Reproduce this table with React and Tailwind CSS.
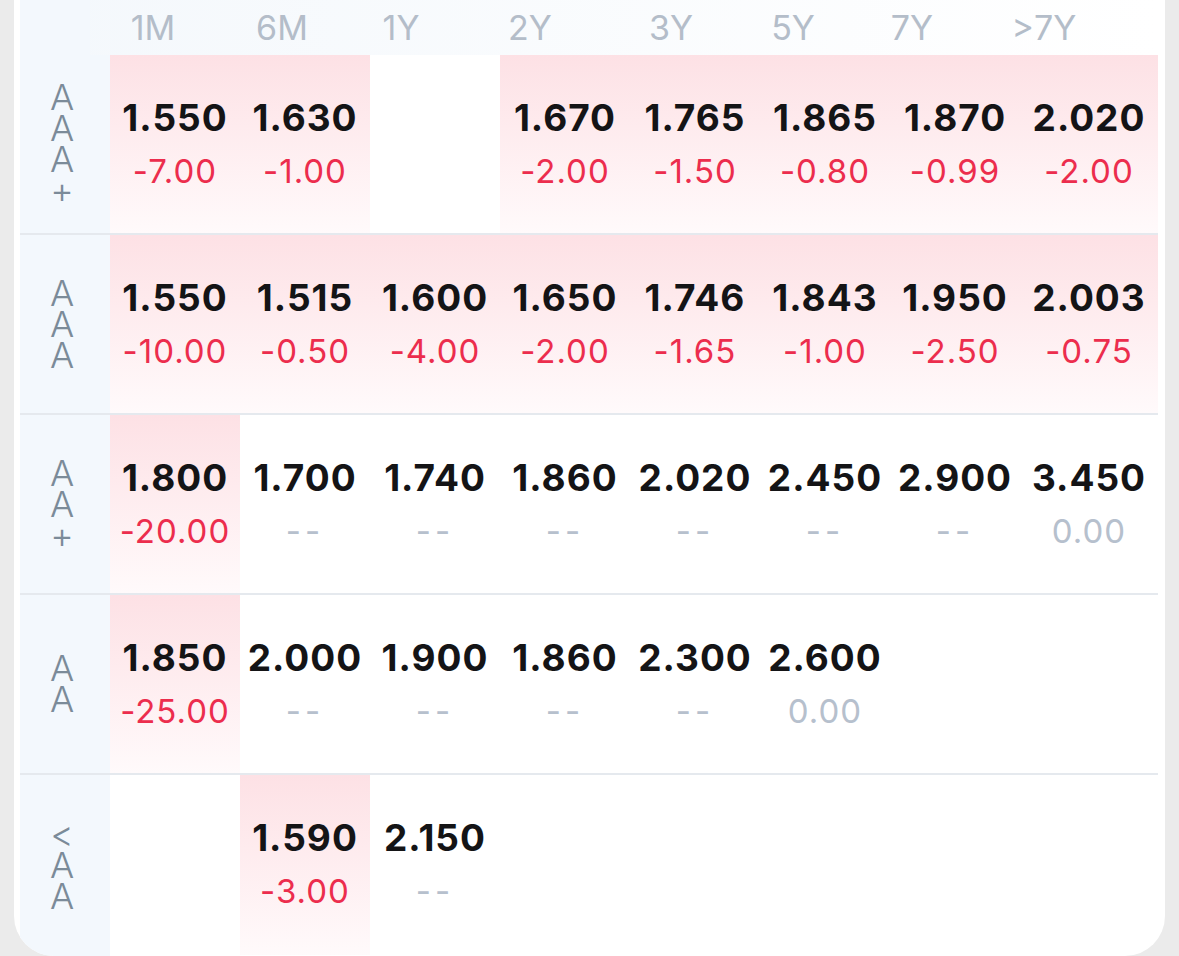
import React from 'react';

const headers = [
  { label: '1M', w: 'w-[126px]' },
  { label: '6M', w: 'w-[132px]' },
  { label: '1Y', w: 'w-[106px]' },
  { label: '2Y', w: 'w-[152px]' },
  { label: '3Y', w: 'w-[130px]' },
  { label: '5Y', w: 'w-[114px]' },
  { label: '7Y', w: 'w-[124px]' },
  { label: '>7Y', w: 'w-[140px]' },
];

// each cell: [rate, change, highlighted]; null = empty
const rows = [
  {
    label: 'AAA+',
    cells: [
      ['1.550', '-7.00', true],
      ['1.630', '-1.00', true],
      null,
      ['1.670', '-2.00', true],
      ['1.765', '-1.50', true],
      ['1.865', '-0.80', true],
      ['1.870', '-0.99', true],
      ['2.020', '-2.00', true],
    ],
  },
  {
    label: 'AAA',
    cells: [
      ['1.550', '-10.00', true],
      ['1.515', '-0.50', true],
      ['1.600', '-4.00', true],
      ['1.650', '-2.00', true],
      ['1.746', '-1.65', true],
      ['1.843', '-1.00', true],
      ['1.950', '-2.50', true],
      ['2.003', '-0.75', true],
    ],
  },
  {
    label: 'AA+',
    cells: [
      ['1.800', '-20.00', true],
      ['1.700', '--', false],
      ['1.740', '--', false],
      ['1.860', '--', false],
      ['2.020', '--', false],
      ['2.450', '--', false],
      ['2.900', '--', false],
      ['3.450', '0.00', false],
    ],
  },
  {
    label: 'AA',
    cells: [
      ['1.850', '-25.00', true],
      ['2.000', '--', false],
      ['1.900', '--', false],
      ['1.860', '--', false],
      ['2.300', '--', false],
      ['2.600', '0.00', false],
      null,
      null,
    ],
  },
  {
    label: '<AA',
    cells: [
      null,
      ['1.590', '-3.00', true],
      ['2.150', '--', false],
      null,
      null,
      null,
      null,
      null,
    ],
  },
];

function Cell({ cell }) {
  if (!cell) return <div />;
  const [rate, change, hot] = cell;
  const down = change.startsWith('-') && change !== '--';
  return (
    <div
      className={
        'flex flex-col items-center pt-[35px] ' +
        (hot ? 'bg-linear-to-b from-[#fde1e5] to-[#fffafb]' : '')
      }
    >
      <span className="text-[37px] leading-[56px] font-bold tracking-[1px] text-[#141416]">{rate}</span>
      <span
        className={
          'text-[33px] leading-[50px] tracking-[1px] ' +
          (down ? 'text-[#ec2d4d]' : change === '--' ? 'text-[#b6c0cd] tracking-[4px]' : 'text-[#b6c0cd]')
        }
      >
        {change}
      </span>
    </div>
  );
}

export default function App() {
  return (
    <div className="min-h-screen bg-[#ebebeb] pl-[14px] pr-[14px] font-['Inter','Noto_Sans',sans-serif]">
      <div className="h-[956px] overflow-hidden rounded-b-[40px] bg-white px-[6px] pr-[7px]">
        <div className="flex h-full flex-col">
          {/* Header */}
          <div className="flex h-[55px] shrink-0 items-center bg-linear-to-r from-[#f4f8fc] to-white">
            <div className="h-full w-[70px] bg-[#f3f8fd]" />
            {headers.map((h) => (
              <div key={h.label} className={h.w + ' text-center text-[34px] leading-[55px] text-[#b4bdc9]'}>
                {h.label}
              </div>
            ))}
          </div>

          {rows.map((r, i) => (
            <div
              key={r.label}
              className={
                'grid h-[180px] shrink-0 grid-cols-[90px_repeat(7,130px)_1fr] ' +
                (i < rows.length - 1 ? 'border-b-[2px] border-[#e5e9ee]' : '')
              }
            >
              <div className="flex flex-col items-center justify-center bg-[#f3f8fd] pr-[6px] text-[36px] leading-[31px] font-light text-[#7b8b99]">
                {r.label.split('').map((ch, k) => (
                  <span key={k} className="block h-[31px]">{ch}</span>
                ))}
              </div>
              {r.cells.map((c, k) => (
                <Cell key={k} cell={c} />
              ))}
            </div>
          ))}
          <div className="w-[90px] flex-1 bg-[#f3f8fd]" />
        </div>
      </div>
    </div>
  );
}
